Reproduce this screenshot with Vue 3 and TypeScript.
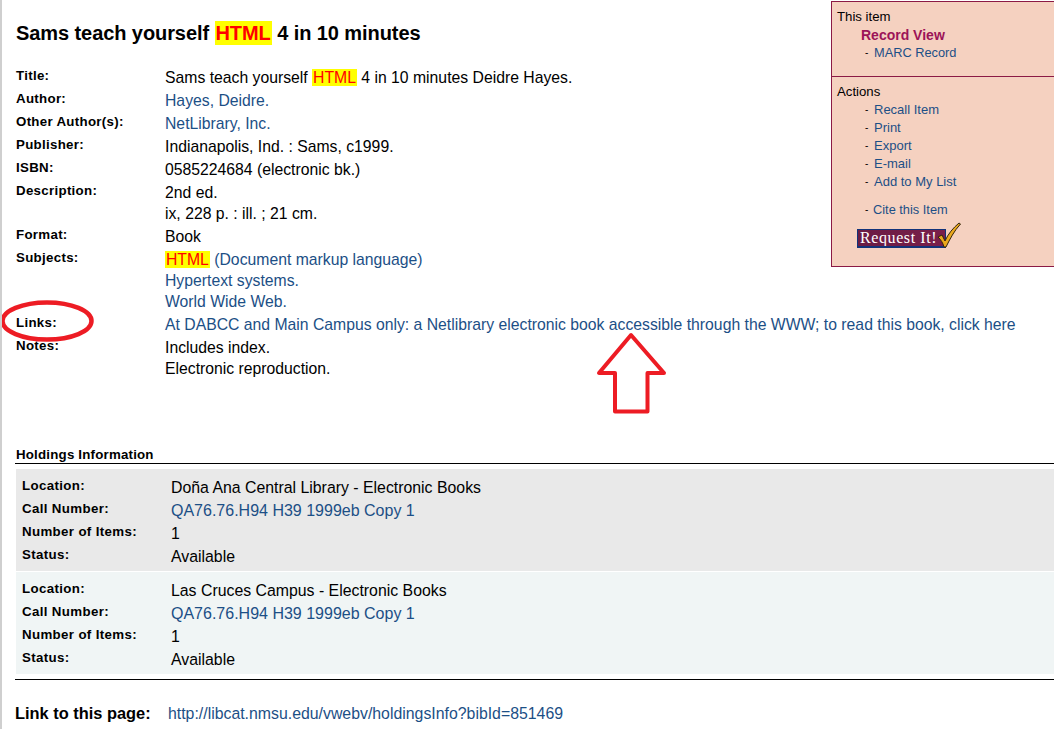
<script setup lang="ts">
interface Row { label: string; lines: { text: string; link?: boolean; hl?: string; after?: string; afterLink?: boolean }[] }
const rows: Row[] = [
  { label: 'Title:', lines: [{ text: 'Sams teach yourself ', hl: 'HTML', after: ' 4 in 10 minutes Deidre Hayes.' }] },
  { label: 'Author:', lines: [{ text: 'Hayes, Deidre.', link: true }] },
  { label: 'Other Author(s):', lines: [{ text: 'NetLibrary, Inc.', link: true }] },
  { label: 'Publisher:', lines: [{ text: 'Indianapolis, Ind. : Sams, c1999.' }] },
  { label: 'ISBN:', lines: [{ text: '0585224684 (electronic bk.)' }] },
  { label: 'Description:', lines: [{ text: '2nd ed.' }, { text: 'ix, 228 p. : ill. ; 21 cm.' }] },
  { label: 'Format:', lines: [{ text: 'Book' }] },
  { label: 'Subjects:', lines: [{ text: '', hl: 'HTML', after: ' (Document markup language)', afterLink: true }, { text: 'Hypertext systems.', link: true }, { text: 'World Wide Web.', link: true }] },
  { label: 'Links:', lines: [{ text: 'At DABCC and Main Campus only: a Netlibrary electronic book accessible through the WWW; to read this book, click here', link: true }] },
  { label: 'Notes:', lines: [{ text: 'Includes index.' }, { text: 'Electronic reproduction.' }] },
]
const holdings = [
  { location: 'Doña Ana Central Library - Electronic Books', tone: 'grey' },
  { location: 'Las Cruces Campus - Electronic Books', tone: 'pale' },
]
const actions = ['Recall Item', 'Print', 'Export', 'E-mail', 'Add to My List']
</script>

<template>
  <div class="page">
    <main class="main">
      <h1 class="title">Sams teach yourself <mark>HTML</mark> 4 in 10 minutes</h1>
      <div class="record">
        <div v-for="row in rows" :key="row.label" class="row">
          <div class="label">{{ row.label }}</div>
          <div class="value">
            <div v-for="(l, i) in row.lines" :key="i" class="line" :class="{ link: l.link }">{{ l.text }}<mark v-if="l.hl">{{ l.hl }}</mark><span v-if="l.after" :class="{ link: l.afterLink }">{{ l.after }}</span></div>
          </div>
        </div>
      </div>

      <h2 class="holdings-title">Holdings Information</h2>
      <div class="holdings">
        <div v-for="h in holdings" :key="h.location" class="block" :class="h.tone">
          <div class="hrow"><div class="label">Location:</div><div class="hval">{{ h.location }}</div></div>
          <div class="hrow"><div class="label">Call Number:</div><div class="hval link call">QA76.76.H94 H39 1999eb Copy 1</div></div>
          <div class="hrow"><div class="label">Number of Items:</div><div class="hval">1</div></div>
          <div class="hrow"><div class="label">Status:</div><div class="hval">Available</div></div>
        </div>
      </div>
      <div class="permalink">
        <span class="plabel">Link to this page:</span>
        <span class="link purl">http://libcat.nmsu.edu/vwebv/holdingsInfo?bibId=851469</span>
      </div>
    </main>

    <aside class="side">
      <section class="side-top">
        <div class="side-head">This item</div>
        <div class="current">Record View</div>
        <div class="item"><i>-</i><span>MARC Record</span></div>
      </section>
      <section class="side-bottom">
        <div class="side-head">Actions</div>
        <div v-for="a in actions" :key="a" class="item action"><i>-</i><span>{{ a }}</span></div>
        <div class="item cite"><i>-</i><span>Cite this Item</span></div>
        <div class="request">
          <span class="request-btn">Request It!</span>
          <svg class="check" width="24" height="26" viewBox="0 0 24 26">
            <path d="M1 15 L5 13 L8 19 C11 12 16 6 22 1 L23.5 2 C17 9 13 17 9 25 L7 25 C6 21 4 18 1 15 Z" fill="#eba91d" stroke="#33240c" stroke-width="1"/>
          </svg>
        </div>
      </section>
    </aside>

    <svg class="ellipse" width="96" height="48" viewBox="0 0 96 48">
      <ellipse cx="47" cy="23" rx="44.5" ry="18.5" fill="none" stroke="#ed1c24" stroke-width="4.5" />
    </svg>
    <svg class="arrow" width="72" height="84" viewBox="0 0 72 84">
      <path d="M36 3 L4 41 L20 41 L20 79.5 L52.5 79.5 L52.5 41 L69 41 Z" fill="#fff" stroke="#ed1c24" stroke-width="4" stroke-linejoin="round" />
    </svg>
  </div>
</template>

<style>
html, body { margin: 0; background: #fff; }
</style>

<style scoped>
.page {
  position: relative;
  width: 1054px;
  height: 729px;
  box-sizing: border-box;
  overflow: hidden;
  border-left: 2px solid #cfcfcf;
  font-family: "Liberation Sans", Arial, sans-serif;
  color: #000;
  background: #fff;
}
.main { padding: 20px 0 0 13px; }
.title {
  margin: 0 0 0 1px;
  font-size: 20px;
  line-height: 26px;
  font-weight: 700;
  letter-spacing: -0.08px;
  white-space: nowrap;
}
mark { background: #ffff00; color: #ff0000; padding: 0 1px; }
.title mark { padding: 1px 1px; }
.record { margin-top: 21px; }
.row { display: flex; padding-bottom: 2px; }
.label {
  font-size: 13.3px;
  font-weight: 700;
  line-height: 17px;
  flex: none;
  letter-spacing: 0.3px;
}
.row .label { width: 149px; padding-left: 1px; }
.value { font-size: 15.75px; }
.line { line-height: 21px; white-space: nowrap; }
.link { color: #1c4f86; }
.holdings-title {
  margin: 65px 0 0;
  padding-left: 1px;
  font-size: 13.3px;
  line-height: 17px;
  font-weight: 700;
  letter-spacing: 0.2px;
  border-bottom: 1px solid #000;
}
.holdings { padding: 5px 0 5px 1px; border-bottom: 1px solid #000; }
.block { padding: 7px 0 3px 6px; height: 102px; box-sizing: border-box; }
.block + .block { margin-top: 1px; }
.grey { background: #e9e9e9; }
.pale { background: #f0f5f5; }
.hrow { display: flex; height: 23px; }
.hrow .label { width: 149px; padding-top: 1px; letter-spacing: 0.35px; }
.hval { font-size: 15.85px; line-height: 23px; white-space: nowrap; }
.call { font-size: 16px; }
.permalink { display: flex; align-items: baseline; margin-top: 24px; }
.plabel { font-size: 16.4px; font-weight: 700; width: 153px; flex: none; white-space: nowrap; }
.purl { font-size: 15.85px; white-space: nowrap; }

.side {
  position: absolute;
  top: 1px;
  left: 829px;
  width: 223px;
  height: 266px;
  box-sizing: border-box;
  background: #f5d1c0;
  border-left: 1px solid #8b1a45;
  border-top: 1px solid #8b1a45;
  border-bottom: 1px solid #8b1a45;
  font-size: 12.8px;
}
.side-top { height: 75px; padding: 6px 0 0 5px; box-sizing: border-box; border-bottom: 1px solid #8b1a45; }
.side-bottom { padding: 6px 0 0 5px; }
.side-head { line-height: 17px; font-size: 13.2px; margin-bottom: 1px; }
.current { margin-left: 24px; font-size: 14px; font-weight: 700; color: #9c1458; line-height: 18px; }
.item { display: flex; line-height: 18px; color: #1c4f86; margin-left: 28px; }
.action { font-size: 13px; }
.item i { font-style: normal; color: #000; width: 9px; font-size: 10px; }
.cite { margin-top: 10px; }
.cite i { width: 8px; }
.request { display: flex; align-items: flex-end; margin: 3px 0 0 20px; height: 26px; }
.request-btn {
  display: block;
  width: 89px;
  height: 19px;
  box-sizing: border-box;
  background: linear-gradient(90deg, #6a1c44, #7a1f4a);
  border: 1px solid #12337a;
  border-bottom-width: 2px;
  color: #fff;
  font-family: "Liberation Serif", serif;
  font-size: 16px;
  line-height: 15px;
  letter-spacing: 0.6px;
  padding-left: 2px;
  white-space: nowrap;
  overflow: hidden;
}
.check { margin-left: -9px; position: relative; }

.ellipse { position: absolute; left: -2px; top: 298px; }
.arrow { position: absolute; left: 593px; top: 332px; }
</style>
